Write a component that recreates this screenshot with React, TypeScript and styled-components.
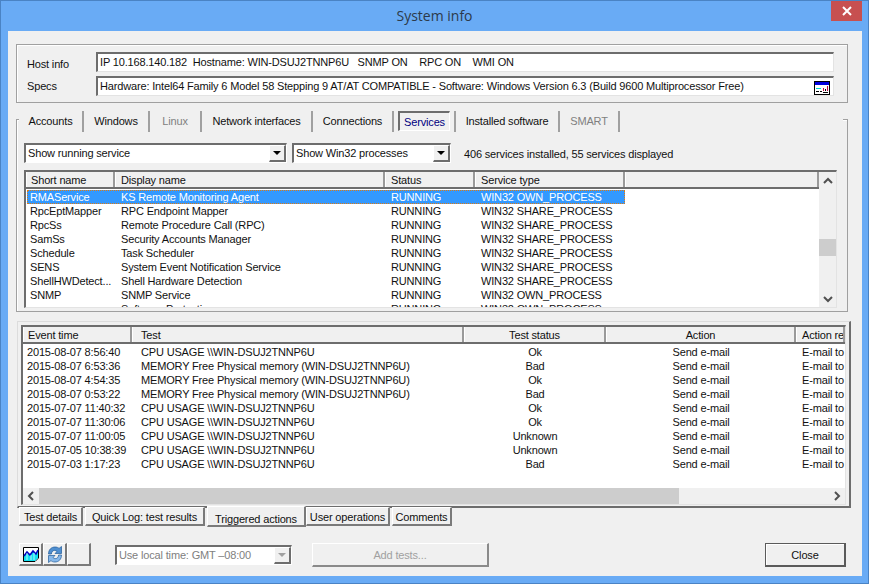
import React from 'react';
import styled, { createGlobalStyle } from 'styled-components';

const GlobalStyle = createGlobalStyle`
  html, body {
    margin: 0;
    padding: 0;
    background: #69abf5;
  }
  * {
    box-sizing: border-box;
  }
`;

const Frame = styled.div`
  width: 869px;
  height: 584px;
  display: flex;
  flex-direction: column;
  background: #69abf5;
  border: 1px solid #4a83c4;
  font-family: "Liberation Sans", Arial, sans-serif;
  font-size: 11px;
  letter-spacing: -0.16px;
  color: #111;
  overflow: hidden;
`;

const TitleBar = styled.div`
  height: 30px;
  flex: none;
  display: grid;
  grid-template-columns: 1fr auto 1fr;
  padding: 0 6px;
`;

const Title = styled.div`
  grid-column: 2;
  font-family: "Open Sans", sans-serif;
  font-size: 14px;
  letter-spacing: 0;
  line-height: 29px;
  color: #2c3a4a;
`;

const CloseX = styled.div`
  grid-column: 3;
  justify-self: end;
  width: 31px;
  height: 20px;
  background: #c75050;
  display: flex;
  align-items: center;
  justify-content: center;
`;

const Client = styled.div`
  flex: 1;
  margin: 0 6px 7px 7px;
  padding: 13px 14px 0 8px;
  background: #f0f0f0;
  display: flex;
  flex-direction: column;
`;

const HostGroup = styled.div`
  height: 59px;
  flex: none;
  border: 1px solid #a0a0a0;
  box-shadow: inset 1px 1px 0 #fff;
  display: grid;
  grid-template-columns: 69px 1fr;
  grid-auto-rows: 20px;
  row-gap: 4px;
  align-items: center;
  padding: 7px 13px 0 10px;
`;

const FieldLabel = styled.div<{ $top: number }>`
  padding-top: ${p => p.$top}px;
`;

const Field = styled.div`
  position: relative;
  height: 20px;
  background: #fff;
  border-style: solid;
  border-width: 2px 1px 1px 2px;
  border-color: #6d6d6d #e3e3e3 #e3e3e3 #6d6d6d;
  padding-left: 2px;
  line-height: 16px;
  white-space: pre;
`;

const SpecsIcon = styled.svg`
  position: absolute;
  right: 3px;
  top: 3px;
`;

const TabPanel = styled.div`
  height: 193px;
  flex: none;
  margin-top: 16px;
  border: 1px solid #a0a0a0;
  box-shadow: inset 1px 1px 0 #fff;
  padding: 0 9px 0 7px;
`;

const TabStrip = styled.div`
  height: 21px;
  margin: -9px -5px 0 -5px;
  background: #f0f0f0;
  display: flex;
`;

const Tab = styled.div<{ $w: number; $disabled?: boolean; $active?: boolean; $gap?: number; $lead?: boolean }>`
  width: ${p => p.$w}px;
  flex: none;
  margin-left: ${p => p.$gap ?? 0}px;
  text-align: center;
  line-height: 21px;
  color: ${p => (p.$active ? '#000080' : p.$disabled ? '#808080' : '#111')};
  white-space: nowrap;
  ${p => (p.$lead ? 'border-left: 2px solid #a0a0a0;' : '')}
  ${p =>
    p.$active
      ? `
    border: 1px solid #fff;
    border-top: 2px solid #6d6d6d;
    border-left: 2px solid #6d6d6d;
    line-height: 18px;
    height: 20px;
  `
      : `
    border-right: 2px solid #a0a0a0;
  `}
`;

const Toolbar = styled.div`
  margin-top: 11px;
  height: 20px;
  display: flex;
  align-items: center;
`;

const Select = styled.div<{ $w: number; $disabled?: boolean; $left?: number }>`
  width: ${p => p.$w}px;
  height: 20px;
  flex: none;
  align-self: center;
  margin-left: ${p => p.$left ?? 0}px;
  display: flex;
  justify-content: space-between;
  align-items: stretch;
  background: #fff;
  border-style: solid;
  border-width: 2px 1px 1px 2px;
  border-color: #6d6d6d #fff #fff #6d6d6d;
  padding-left: 2px;
  line-height: 16px;
  color: ${p => (p.$disabled ? '#808080' : '#111')};
`;

const SelectButton = styled.div<{ $disabled?: boolean }>`
  width: 17px;
  flex: none;
  background: #f0f0f0;
  border-style: solid;
  border-width: 1px 2px 2px 1px;
  border-color: #fff #6d6d6d #6d6d6d #fff;
  display: flex;
  align-items: center;
  justify-content: center;
  color: ${p => (p.$disabled ? '#a0a0a0' : '#000')};

  &::after {
    content: '';
    border-style: solid;
    border-width: 4px 4px 0 4px;
    border-color: currentColor transparent transparent transparent;
  }
`;

const Summary = styled.div`
  margin-left: 13px;
  padding-top: 2px;
`;

const ListView = styled.div<{ $h: number }>`
  display: flex;
  height: ${p => p.$h}px;
  flex: none;
  border-style: solid;
  border-width: 2px 1px 1px 2px;
  border-color: #6d6d6d #e3e3e3 #e3e3e3 #6d6d6d;
  background: #fff;
`;

const ServicesList = styled(ListView)`
  margin-top: 7px;
  width: 813px;
`;

const ListMain = styled.div`
  flex: 1;
  min-width: 0;
  display: flex;
  flex-direction: column;
  overflow: hidden;
`;

const HeaderRow = styled.div`
  display: flex;
  height: 17px;
  flex: none;
  border-bottom: 2px solid #6d6d6d;
  background: #f0f0f0;
`;

const HeaderCell = styled.div<{ $w?: number; $center?: boolean; $pad?: number }>`
  width: ${p => (p.$w ? `${p.$w}px` : 'auto')};
  flex: ${p => (p.$w ? 'none' : '1')};
  padding-left: ${p => (p.$center ? 0 : p.$pad ?? 5)}px;
  text-align: ${p => (p.$center ? 'center' : 'left')};
  line-height: 16px;
  border-left: 1px solid #fff;
  border-right: 2px solid #9a9a9a;
  white-space: nowrap;
  overflow: hidden;
`;

const Rows = styled.div<{ $top: number }>`
  flex: 1;
  min-height: 0;
  overflow: hidden;
  padding: ${p => p.$top}px 0 0 1px;
`;

const Row = styled.div<{ $selected?: boolean; $w: number }>`
  display: flex;
  width: ${p => p.$w}px;
  height: 14px;
  line-height: 14px;
  color: ${p => (p.$selected ? '#fff' : '#111')};
  background: ${p => (p.$selected ? '#3399ff' : 'transparent')};
  outline: ${p => (p.$selected ? '1px dotted #e07a10' : 'none')};
  outline-offset: -1px;
`;

const Cell = styled.div<{ $w: number; $center?: boolean; $pad?: number }>`
  width: ${p => p.$w}px;
  flex: none;
  padding-left: ${p => (p.$center ? 0 : p.$pad ?? 0)}px;
  text-align: ${p => (p.$center ? 'center' : 'left')};
  white-space: nowrap;
  overflow: hidden;
`;

const VScroll = styled.div`
  width: 17px;
  flex: none;
  background: #f0f0f0;
  display: flex;
  flex-direction: column;
  align-items: center;
`;

const ArrowBox = styled.div<{ $w?: number }>`
  width: ${p => p.$w ?? 17}px;
  height: 17px;
  flex: none;
  display: flex;
  align-items: center;
  justify-content: center;
`;

const VTrack = styled.div`
  flex: 1;
  width: 100%;
  padding-top: 50px;
`;

const VThumb = styled.div`
  height: 17px;
  background: #cdcdcd;
`;

const HScroll = styled.div`
  height: 16px;
  flex: none;
  margin-top: auto;
  background: #f0f0f0;
  display: flex;
  align-items: center;
`;

const HTrack = styled.div`
  flex: 1;
`;

const HThumb = styled.div`
  width: 640px;
  height: 100%;
  background: #cdcdcd;
`;

const LogPane = styled.div`
  width: 834px;
  height: 187px;
  flex: none;
  margin: 9px 0 0 1px;
  border-style: solid;
  border-width: 1px 2px 2px 1px;
  border-color: #dcdcdc #6d6d6d #6d6d6d #dcdcdc;
  padding: 3px 3px 0 3px;
`;

const LogRows = styled(Rows)`
  flex: none;
`;

const BottomTabs = styled.div`
  display: flex;
  height: 21px;
  margin: -2px 0 0 3px;
  flex: none;
`;

const BottomTab = styled.div<{ $w: number; $active?: boolean; $gap?: number }>`
  width: ${p => p.$w}px;
  height: ${p => (p.$active ? 21 : 19)}px;
  flex: none;
  margin-left: ${p => p.$gap ?? 0}px;
  margin-top: ${p => (p.$active ? 0 : 1)}px;
  text-align: center;
  line-height: ${p => (p.$active ? 24 : 18)}px;
  white-space: nowrap;
  background: #f0f0f0;
  border-style: solid;
  border-width: 1px 2px 2px 1px;
  border-color: #fff #7a7a7a #7a7a7a #fff;
  position: relative;
  z-index: ${p => (p.$active ? 1 : 0)};
`;

const Footer = styled.div`
  display: flex;
  align-items: flex-start;
  margin: 16px 2px 0 3px;
  height: 24px;
`;

const IconButton = styled.div`
  width: 24px;
  height: 23px;
  flex: none;
  background: #f0f0f0;
  border-style: solid;
  border-width: 1px 2px 2px 1px;
  border-color: #fff #7a7a7a #7a7a7a #fff;
  display: flex;
  align-items: center;
  justify-content: center;
`;

const PushButton = styled.div<{ $w: number; $left?: number; $disabled?: boolean; $default?: boolean }>`
  width: ${p => p.$w}px;
  height: 24px;
  flex: none;
  margin-left: ${p => (p.$left === undefined ? 'auto' : `${p.$left}px`)};
  text-align: center;
  line-height: 22px;
  color: ${p => (p.$disabled ? '#a0a0a0' : '#111')};
  border-style: solid;
  border-width: 1px 2px 2px 1px;
  border-color: ${p =>
    p.$default ? '#5a5a5a #5a5a5a #5a5a5a #5a5a5a' : '#fff #8a8a8a #8a8a8a #fff'};
  ${p => (p.$default ? 'box-shadow: inset 1px 1px 0 #fff;' : '')}
`;

const serviceCols = [88, 270, 90, 150];
const serviceRows = [
  ['RMAService', 'KS Remote Monitoring Agent', 'RUNNING', 'WIN32 OWN_PROCESS'],
  ['RpcEptMapper', 'RPC Endpoint Mapper', 'RUNNING', 'WIN32 SHARE_PROCESS'],
  ['RpcSs', 'Remote Procedure Call (RPC)', 'RUNNING', 'WIN32 SHARE_PROCESS'],
  ['SamSs', 'Security Accounts Manager', 'RUNNING', 'WIN32 SHARE_PROCESS'],
  ['Schedule', 'Task Scheduler', 'RUNNING', 'WIN32 SHARE_PROCESS'],
  ['SENS', 'System Event Notification Service', 'RUNNING', 'WIN32 SHARE_PROCESS'],
  ['ShellHWDetect...', 'Shell Hardware Detection', 'RUNNING', 'WIN32 SHARE_PROCESS'],
  ['SNMP', 'SNMP Service', 'RUNNING', 'WIN32 OWN_PROCESS'],
  ['sppsvc', 'Software Protection', 'RUNNING', 'WIN32 OWN_PROCESS'],
];

const logCols = [108, 332, 142, 190, 50];
const logRows = [
  ['2015-08-07 8:56:40', 'CPU USAGE \\\\WIN-DSUJ2TNNP6U', 'Ok'],
  ['2015-08-07 6:53:36', 'MEMORY Free Physical memory (WIN-DSUJ2TNNP6U)', 'Bad'],
  ['2015-08-07 4:54:35', 'MEMORY Free Physical memory (WIN-DSUJ2TNNP6U)', 'Ok'],
  ['2015-08-07 0:53:22', 'MEMORY Free Physical memory (WIN-DSUJ2TNNP6U)', 'Bad'],
  ['2015-07-07 11:40:32', 'CPU USAGE \\\\WIN-DSUJ2TNNP6U', 'Ok'],
  ['2015-07-07 11:30:06', 'CPU USAGE \\\\WIN-DSUJ2TNNP6U', 'Ok'],
  ['2015-07-07 11:00:05', 'CPU USAGE \\\\WIN-DSUJ2TNNP6U', 'Unknown'],
  ['2015-07-05 10:38:39', 'CPU USAGE \\\\WIN-DSUJ2TNNP6U', 'Unknown'],
  ['2015-07-03 1:17:23', 'CPU USAGE \\\\WIN-DSUJ2TNNP6U', 'Bad'],
];

function Chevron({ dir }: { dir: 'up' | 'down' | 'left' | 'right' }) {
  const points = {
    up: '1,6 5,2 9,6',
    down: '1,2 5,6 9,2',
    left: '6,1 2,5 6,9',
    right: '2,1 6,5 2,9',
  }[dir];
  const vertical = dir === 'up' || dir === 'down';
  return (
    <svg width={vertical ? 10 : 8} height={vertical ? 8 : 10} viewBox={vertical ? '0 0 10 8' : '0 0 8 10'}>
      <polyline points={points} fill="none" stroke="#505050" strokeWidth="2" />
    </svg>
  );
}

function WindowIcon() {
  return (
    <SpecsIcon width="16" height="14" viewBox="0 0 16 14" shapeRendering="crispEdges">
      <rect x="0.5" y="0.5" width="15" height="13" fill="#fff" stroke="#000" />
      <rect x="1" y="1" width="14" height="3" fill="#0000e0" />
      <rect x="2" y="7" width="5" height="1" fill="#00d0d0" />
      <rect x="2" y="10" width="3" height="1" fill="#000" />
      <rect x="6" y="10" width="2" height="1" fill="#000" />
      <rect x="9" y="7" width="1" height="3" fill="#c00040" />
      <rect x="11" y="8" width="1" height="2" fill="#000" />
      <rect x="13" y="5" width="1" height="5" fill="#c00040" />
      <rect x="9" y="11" width="5" height="1" fill="#000" />
    </SpecsIcon>
  );
}

function ChartIcon() {
  return (
    <svg width="16" height="15" viewBox="0 0 16 15">
      <path d="M0.5 0.5H15.5V11L12 14.5H0.5Z" fill="#fff" stroke="#000" />
      <path d="M1 13V9L4 5L7 8L10 4L13 7L15 3V11L12 14H1Z" fill="#10e0f0" />
      <path d="M1 9L4 5L7 8L10 4L13 7L15 3" fill="none" stroke="#0000c0" strokeWidth="1.6" />
      <path d="M4 6V13M8 8V13M11 6V13" stroke="#fff" strokeWidth="0.7" />
    </svg>
  );
}

function RefreshIcon() {
  return (
    <svg width="16" height="17" viewBox="0 0 16 17">
      <path d="M1.5 8C1.5 3.5 4.5 1 8 1C10 1 11.2 1.6 12 2.4L14.5 0.5V7.5H8L10 5.5C9.2 4.8 8.6 4.4 7.6 4.4C6 4.4 4.6 5.6 4.4 8Z" fill="#4f8fd0" stroke="#1f5a9a" strokeWidth="0.7" />
      <path d="M14.5 9C14.5 13.5 11.5 16 8 16C6 16 4.8 15.4 4 14.6L1.5 16.5V9.5H8L6 11.5C6.8 12.2 7.4 12.6 8.4 12.6C10 12.6 11.4 11.4 11.6 9Z" fill="#86b8ea" stroke="#1f5a9a" strokeWidth="0.7" />
    </svg>
  );
}

export default function App() {
  return (
    <>
      <GlobalStyle />
      <Frame>
        <TitleBar>
          <Title>System info</Title>
          <CloseX>
            <svg width="10" height="10" viewBox="0 0 10 10">
              <path d="M1 1L9 9M9 1L1 9" stroke="#fff" strokeWidth="2" />
            </svg>
          </CloseX>
        </TitleBar>
        <Client>
          <HostGroup>
            <FieldLabel $top={3}>Host info</FieldLabel>
            <Field>IP 10.168.140.182  Hostname: WIN-DSUJ2TNNP6U   SNMP ON    RPC ON    WMI ON</Field>
            <FieldLabel $top={0}>Specs</FieldLabel>
            <Field>
              Hardware: Intel64 Family 6 Model 58 Stepping 9 AT/AT COMPATIBLE - Software: Windows Version 6.3 (Build 9600 Multiprocessor Free)
              <WindowIcon />
            </Field>
          </HostGroup>

          <TabPanel>
            <TabStrip>
              <Tab $w={65}>Accounts</Tab>
              <Tab $w={66}>Windows</Tab>
              <Tab $w={52} $disabled>Linux</Tab>
              <Tab $w={111}>Network interfaces</Tab>
              <Tab $w={81}>Connections</Tab>
              <Tab $w={52} $gap={4} $active>Services</Tab>
              <Tab $w={106} $gap={4} $lead>Installed software</Tab>
              <Tab $w={60} $disabled>SMART</Tab>
            </TabStrip>
            <Toolbar>
              <Select $w={263}>
                Show running service
                <SelectButton />
              </Select>
              <Select $w={159} $left={5}>
                Show Win32 processes
                <SelectButton />
              </Select>
              <Summary>406 services installed, 55 services displayed</Summary>
            </Toolbar>
            <ServicesList $h={138}>
              <ListMain>
                <HeaderRow>
                  <HeaderCell $w={89} $pad={4}>Short name</HeaderCell>
                  <HeaderCell $w={270}>Display name</HeaderCell>
                  <HeaderCell $w={90}>Status</HeaderCell>
                  <HeaderCell $w={150}>Service type</HeaderCell>
                  <HeaderCell />
                </HeaderRow>
                <Rows $top={1}>
                  {serviceRows.map((r, i) => (
                    <Row key={r[0]} $w={598} $selected={i === 0}>
                      {r.map((text, c) => (
                        <Cell key={c} $w={serviceCols[c]} $pad={c === 0 ? 3 : 6}>{text}</Cell>
                      ))}
                    </Row>
                  ))}
                </Rows>
              </ListMain>
              <VScroll>
                <ArrowBox><Chevron dir="up" /></ArrowBox>
                <VTrack><VThumb /></VTrack>
                <ArrowBox><Chevron dir="down" /></ArrowBox>
              </VScroll>
            </ServicesList>
          </TabPanel>

          <LogPane>
            <ListView $h={180}>
              <ListMain>
                <HeaderRow>
                  <HeaderCell $w={109} $pad={4}>Event time</HeaderCell>
                  <HeaderCell $w={332} $pad={8}>Test</HeaderCell>
                  <HeaderCell $w={142} $center>Test status</HeaderCell>
                  <HeaderCell $w={190} $center>Action</HeaderCell>
                  <HeaderCell $pad={5}>Action re</HeaderCell>
                </HeaderRow>
                <LogRows $top={1}>
                  {logRows.map((r, i) => (
                    <Row key={i} $w={824}>
                      <Cell $w={logCols[0]} $pad={3}>{r[0]}</Cell>
                      <Cell $w={logCols[1]} $pad={9}>{r[1]}</Cell>
                      <Cell $w={logCols[2]} $center>{r[2]}</Cell>
                      <Cell $w={logCols[3]} $center>Send e-mail</Cell>
                      <Cell $w={logCols[4]} $pad={6}>E-mail to</Cell>
                    </Row>
                  ))}
                </LogRows>
                <HScroll>
                  <ArrowBox $w={16}><Chevron dir="left" /></ArrowBox>
                  <HThumb />
                  <HTrack />
                  <ArrowBox><Chevron dir="right" /></ArrowBox>
                </HScroll>
              </ListMain>
            </ListView>
          </LogPane>

          <BottomTabs>
            <BottomTab $w={64}>Test details</BottomTab>
            <BottomTab $w={120} $gap={2}>Quick Log: test results</BottomTab>
            <BottomTab $w={99} $gap={2} $active>Triggered actions</BottomTab>
            <BottomTab $w={84}>User operations</BottomTab>
            <BottomTab $w={60} $gap={2}>Comments</BottomTab>
          </BottomTabs>

          <Footer>
            <IconButton><ChartIcon /></IconButton>
            <IconButton><RefreshIcon /></IconButton>
            <IconButton />
            <Select $w={177} $left={24} $disabled>
              Use local time: GMT –08:00
              <SelectButton $disabled />
            </Select>
            <PushButton $w={177} $left={20} $disabled>Add tests...</PushButton>
            <PushButton $w={81} $default>Close</PushButton>
          </Footer>
        </Client>
      </Frame>
    </>
  );
}
